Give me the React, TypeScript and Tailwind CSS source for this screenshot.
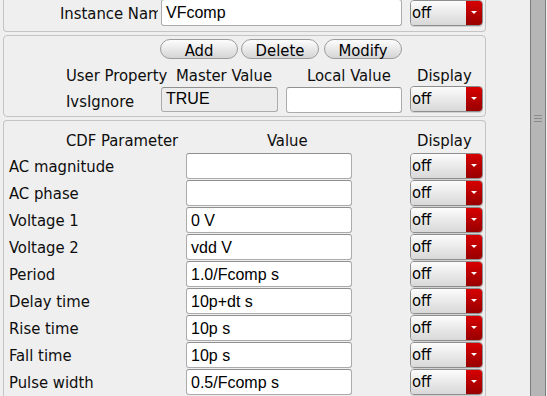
import React from 'react';

const rows: { label: string; value: string }[] = [
  { label: 'AC magnitude', value: '' },
  { label: 'AC phase', value: '' },
  { label: 'Voltage 1', value: '0 V' },
  { label: 'Voltage 2', value: 'vdd V' },
  { label: 'Period', value: '1.0/Fcomp s' },
  { label: 'Delay time', value: '10p+dt s' },
  { label: 'Rise time', value: '10p s' },
  { label: 'Fall time', value: '10p s' },
  { label: 'Pulse width', value: '0.5/Fcomp s' },
];

function OffSelect() {
  return (
    <div className="flex h-[26px] w-[73px] shrink-0 overflow-hidden rounded-[4px] border border-[#8e8e8e] shadow-[0_1px_0_rgba(0,0,0,0.12)]">
      <div className="flex flex-1 items-center bg-linear-to-b from-[#fcfcfc] to-[#d8d8d8] pl-[1px] leading-none text-black">
        off
      </div>
      <div className="flex w-[16px] justify-center bg-linear-to-b from-[#d80000] to-[#980000] pt-[10px]">
        <div className="h-0 w-0 border-x-[3px] border-t-[3px] border-x-transparent border-t-white" />
      </div>
    </div>
  );
}

function TextField({ value, className }: { value: string; className: string }) {
  return (
    <div
      className={`shrink-0 rounded-[3px] border border-[#ababab] border-t-[#909090] pl-[4px] font-['Liberation_Sans',Arial,sans-serif] text-[16px] text-black ${className}`}
    >
      {value}
    </div>
  );
}

function PillButton({ label }: { label: string }) {
  return (
    <div className="flex h-[20px] w-[78px] items-start justify-center rounded-full border border-[#9c9c9c] bg-linear-to-b from-[#fdfdfd] to-[#d5d5d5] pt-[3px] leading-none text-black">
      {label}
    </div>
  );
}

export default function App() {
  return (
    <div className="flex h-[396px] w-[547px] overflow-hidden bg-[#efefef] font-['DejaVu_Sans_Condensed','DejaVu_Sans',sans-serif] text-[16.5px] text-[#0d0d0d]">
      <div className="flex w-[530px] flex-col pl-[3px]">
        {/* instance name */}
        <div className="flex h-[32px] w-[483px] shrink-0 items-start rounded-b-[4px] border-x border-b border-[#c4c4c4] pr-[2px]">
          <div className="ml-[56px] mt-[6px] w-[98px] overflow-hidden whitespace-nowrap leading-none">Instance Name</div>
          <TextField value="VFcomp" className="ml-[3px] -mt-[1px] h-[27px] w-[241px] bg-white leading-[26px]" />
          <div className="ml-[8px]">
            <OffSelect />
          </div>
        </div>

        {/* user properties */}
        <div className="mt-[3px] flex h-[82px] w-[483px] shrink-0 flex-col rounded-[4px] border border-[#c4c4c4]">
          <div className="mt-[3px] flex gap-[3px] pl-[156px]">
            <PillButton label="Add" />
            <PillButton label="Delete" />
            <div className="ml-[2px]">
              <PillButton label="Modify" />
            </div>
          </div>
          <div className="flex h-[28px] items-start whitespace-nowrap pl-[62px] pt-[9px] leading-none">
            <span className="w-[110px]">User Property</span>
            <span className="w-[131px]">Master Value</span>
            <span className="w-[110px]">Local Value</span>
            <span>Display</span>
          </div>
          <div className="flex items-start pl-[62px]">
            <span className="mt-[7px] w-[95px] leading-none">IvsIgnore</span>
            <TextField value="TRUE" className="h-[25px] w-[117px] bg-[#ececec] leading-[22px]" />
            <TextField value="" className="ml-[8px] h-[26px] w-[116px] bg-white" />
            <div className="ml-[8px] -mt-[1px]">
              <OffSelect />
            </div>
          </div>
        </div>

        {/* CDF parameters */}
        <div className="mt-[3px] flex w-[483px] flex-1 flex-col rounded-t-[4px] border-x border-t border-[#c4c4c4]">
          <div className="flex h-[32px] items-start whitespace-nowrap pl-[62px] pt-[12px] leading-none">
            <span className="w-[201px]">CDF Parameter</span>
            <span className="w-[150px]">Value</span>
            <span>Display</span>
          </div>
          {rows.map((r, i) => (
            <div key={i} className="flex h-[27px] shrink-0 items-start">
              <span className="mt-[6px] w-[182px] whitespace-nowrap pl-[5px] leading-none">{r.label}</span>
              <TextField value={r.value} className="h-[26px] w-[166px] bg-white leading-[25px]" />
              <div className="ml-[58px]">
                <OffSelect />
              </div>
            </div>
          ))}
          <div className="flex h-[27px] shrink-0 items-start pl-[182px]">
            <div className="h-[26px] w-[166px] shrink-0 rounded-[3px] border border-[#ababab] border-t-[#909090] bg-white" />
          </div>
        </div>
      </div>

      {/* scrollbar */}
      <div className="flex w-[16px] flex-col items-center border-x border-[#7c7c7c] bg-[#b6b6b6] pt-[115px]">
        <div className="flex flex-col gap-[2px]">
          <div className="h-px w-[8px] bg-[#8a8a8a]" />
          <div className="h-px w-[8px] bg-[#8a8a8a]" />
          <div className="h-px w-[8px] bg-[#8a8a8a]" />
        </div>
      </div>
    </div>
  );
}
